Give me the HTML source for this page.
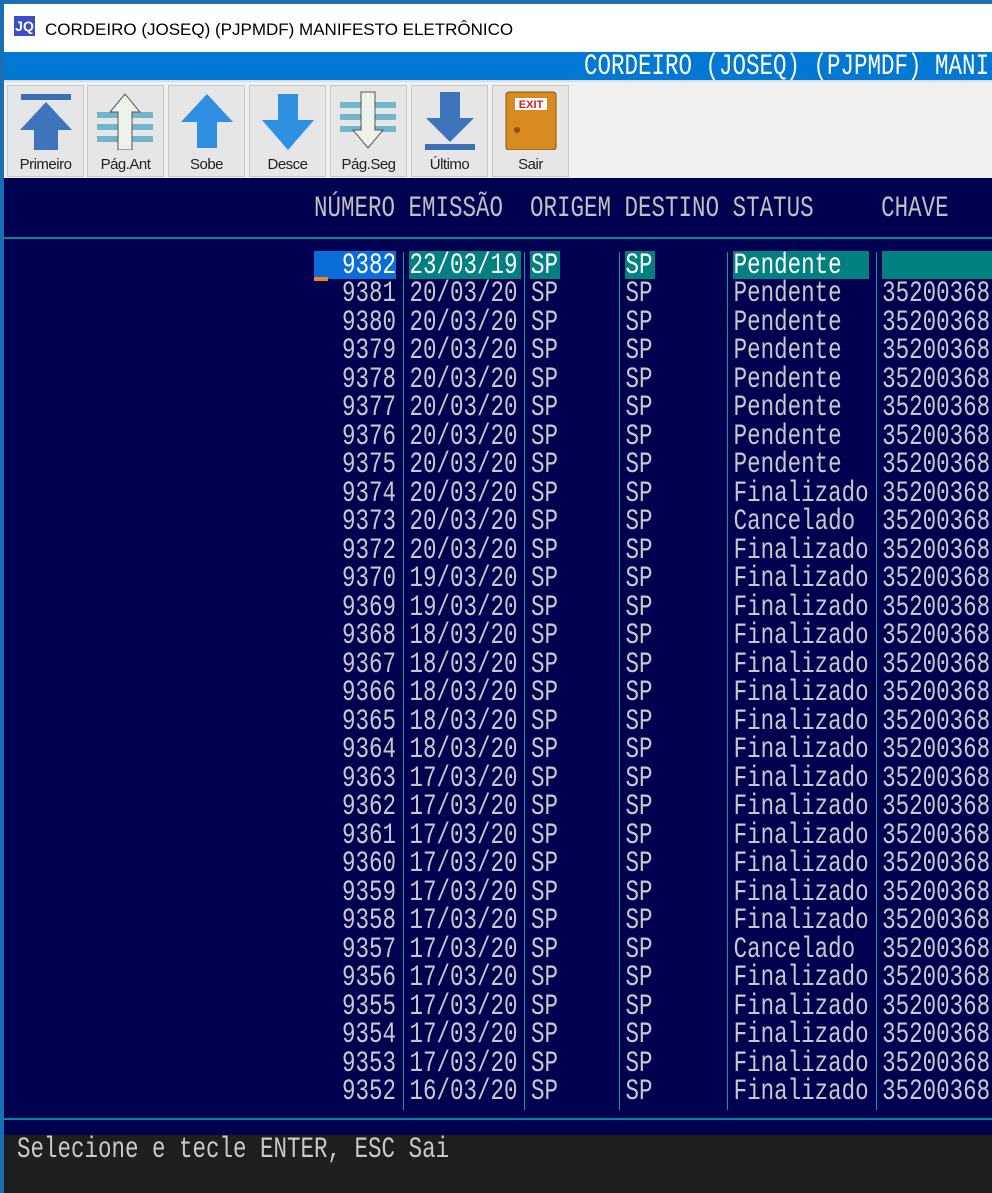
<!DOCTYPE html>
<html><head><meta charset="utf-8"><style>
*{margin:0;padding:0;box-sizing:border-box}
body{width:992px;height:1193px;overflow:hidden;background:#1b6fb0;position:relative;font-family:"Liberation Sans",sans-serif}
.win{position:absolute;left:4px;top:4px;width:988px;height:1189px;background:#000050}
.title{position:absolute;left:0;top:0;width:988px;height:48px;background:#fff}
.title .t{position:absolute;left:41px;top:16px;font-size:17px;color:#000}
.logo{position:absolute;left:10px;top:12px;width:21px;height:22px;background:#3a4ec8;color:#fff;font:bold 14px "Liberation Sans";text-align:center;line-height:20px;border-bottom:2px solid #fff}
.bluebar{position:absolute;left:0;top:48px;width:988px;height:28px;background:#0078d4}
.mono{font-family:"Liberation Mono","DejaVu Sans Mono",monospace}
.bluebar .t{position:absolute;left:580px;top:0;font-size:22.5px;color:#fff;white-space:pre;line-height:28px}
.tb{position:absolute;left:0;top:76px;width:988px;height:98px;background:#f0f0f0;border-top:2px solid #ddd}
.btn{position:absolute;top:3px;width:77px;height:92px;background:#e6e6e6;border:1px solid #c8c8c8}
.btn .l{position:absolute;left:0;right:0;bottom:3px;text-align:center;font-size:15px;color:#222;letter-spacing:-0.5px}
.btn svg{position:absolute;left:6px;top:4px}
.r{position:absolute;height:28px;line-height:28px;font-size:22.5px;color:#c8c8c8;white-space:pre;font-family:"Liberation Mono","DejaVu Sans Mono",monospace}
.s{display:inline-block;transform:scaleY(1.3)}
.sep{position:absolute;width:1px;background:#00a0a0;top:248px;height:858px}
</style></head><body>
<div class="win">
<div class="title"><div class="logo">JQ</div><div class="t">CORDEIRO (JOSEQ) (PJPMDF) MANIFESTO ELETRÔNICO</div></div>
<div class="bluebar"><div class="t mono"><span class="s">CORDEIRO (JOSEQ) (PJPMDF) MANI</span></div></div>
<div class="tb">
<div class="btn" style="left:3px"><svg width="64" height="60"><rect x="7" y="4" width="50" height="6" fill="#3a6fb5"/><path d="M32 12 L58 40 L44 40 L44 60 L20 60 L20 40 L6 40Z" fill="#3d74bb"/></svg><div class="l">Primeiro</div></div>
<div class="btn" style="left:83px"><svg width="64" height="60"><g fill="#6fb6cc"><rect x="3" y="22" width="56" height="6"/><rect x="3" y="34" width="56" height="6"/><rect x="3" y="46" width="56" height="6"/></g><path d="M31 4 L46 22 L38 22 L38 60 L24 60 L24 22 L16 22Z" fill="#eef0ea" stroke="#555"/></svg><div class="l">Pág.Ant</div></div>
<div class="btn" style="left:164px"><svg width="64" height="60"><path d="M32 4 L58 32 L42 32 L42 58 L22 58 L22 32 L6 32Z" fill="#2f8fe0"/></svg><div class="l">Sobe</div></div>
<div class="btn" style="left:245px"><svg width="64" height="60"><path d="M22 4 L42 4 L42 30 L58 30 L32 60 L6 30 L22 30Z" fill="#2f8fe0"/></svg><div class="l">Desce</div></div>
<div class="btn" style="left:326px"><svg width="64" height="60"><g fill="#6fb6cc"><rect x="3" y="12" width="56" height="6"/><rect x="3" y="24" width="56" height="6"/><rect x="3" y="36" width="56" height="6"/></g><path d="M24 2 L38 2 L38 40 L46 40 L31 58 L16 40 L24 40Z" fill="#eef0ea" stroke="#555"/></svg><div class="l">Pág.Seg</div></div>
<div class="btn" style="left:407px"><svg width="64" height="60"><path d="M22 2 L42 2 L42 28 L56 28 L32 52 L8 28 L22 28Z" fill="#3d74bb"/><rect x="7" y="54" width="50" height="6" fill="#3a6fb5"/></svg><div class="l">Último</div></div>
<div class="btn" style="left:488px"><svg width="64" height="60"><rect x="7" y="2" width="50" height="58" rx="3" fill="#d68a20" stroke="#8a5200"/><rect x="16" y="8" width="32" height="12" fill="#fff"/><text x="32" y="18" font-size="11" font-weight="bold" fill="#d02020" text-anchor="middle" font-family="Liberation Sans">EXIT</text><circle cx="18" cy="40" r="3" fill="#8a5200"/></svg><div class="l">Sair</div></div>
</div>
<div style="position:absolute;left:0;top:233px;width:988px;height:2px;background:#008c96"></div>
<div style="position:absolute;left:0;top:1114px;width:988px;height:2px;background:#008c96"></div>
<div style="position:absolute;left:0;top:1131px;width:988px;height:58px;background:#1e1e1e"></div>
<div class="r" style="left:13px;top:1131px;color:#c8c8c8"><span class="s">Selecione e tecle ENTER, ESC Sai</span></div>
<div class="r" style="left:310px;top:190px;color:#c0c0c0"><span class="s">NÚMERO EMISSÃO  ORIGEM DESTINO STATUS     CHAVE</span></div>
<div class="sep" style="left:399px"></div><div class="sep" style="left:520px"></div><div class="sep" style="left:615px"></div><div class="sep" style="left:723px"></div><div class="sep" style="left:872px"></div>
<div style="position:absolute;left:310px;top:247px;width:82px;height:28px;background:#0a6ed8"></div>
<div style="position:absolute;left:310px;top:273px;width:14px;height:4px;background:#f08020"></div>
<div style="position:absolute;left:405px;top:247px;width:112px;height:28px;background:#008080"></div>
<div style="position:absolute;left:526px;top:247px;width:30px;height:28px;background:#008080"></div>
<div style="position:absolute;left:621px;top:247px;width:30px;height:28px;background:#008080"></div>
<div style="position:absolute;left:729px;top:247px;width:136px;height:28px;background:#008080"></div>
<div style="position:absolute;left:878px;top:247px;width:110px;height:28px;background:#008080"></div>
<div class="r" style="left:338px;top:247px;color:#fff"><span class="s">9382 23/03/19 SP     SP      Pendente</span></div>
<div class="r" style="left:338px;top:275px"><span class="s">9381 20/03/20 SP     SP      Pendente   35200368</span></div>
<div class="r" style="left:338px;top:304px"><span class="s">9380 20/03/20 SP     SP      Pendente   35200368</span></div>
<div class="r" style="left:338px;top:332px"><span class="s">9379 20/03/20 SP     SP      Pendente   35200368</span></div>
<div class="r" style="left:338px;top:361px"><span class="s">9378 20/03/20 SP     SP      Pendente   35200368</span></div>
<div class="r" style="left:338px;top:389px"><span class="s">9377 20/03/20 SP     SP      Pendente   35200368</span></div>
<div class="r" style="left:338px;top:418px"><span class="s">9376 20/03/20 SP     SP      Pendente   35200368</span></div>
<div class="r" style="left:338px;top:446px"><span class="s">9375 20/03/20 SP     SP      Pendente   35200368</span></div>
<div class="r" style="left:338px;top:475px"><span class="s">9374 20/03/20 SP     SP      Finalizado 35200368</span></div>
<div class="r" style="left:338px;top:503px"><span class="s">9373 20/03/20 SP     SP      Cancelado  35200368</span></div>
<div class="r" style="left:338px;top:532px"><span class="s">9372 20/03/20 SP     SP      Finalizado 35200368</span></div>
<div class="r" style="left:338px;top:560px"><span class="s">9370 19/03/20 SP     SP      Finalizado 35200368</span></div>
<div class="r" style="left:338px;top:589px"><span class="s">9369 19/03/20 SP     SP      Finalizado 35200368</span></div>
<div class="r" style="left:338px;top:617px"><span class="s">9368 18/03/20 SP     SP      Finalizado 35200368</span></div>
<div class="r" style="left:338px;top:646px"><span class="s">9367 18/03/20 SP     SP      Finalizado 35200368</span></div>
<div class="r" style="left:338px;top:674px"><span class="s">9366 18/03/20 SP     SP      Finalizado 35200368</span></div>
<div class="r" style="left:338px;top:703px"><span class="s">9365 18/03/20 SP     SP      Finalizado 35200368</span></div>
<div class="r" style="left:338px;top:731px"><span class="s">9364 18/03/20 SP     SP      Finalizado 35200368</span></div>
<div class="r" style="left:338px;top:760px"><span class="s">9363 17/03/20 SP     SP      Finalizado 35200368</span></div>
<div class="r" style="left:338px;top:788px"><span class="s">9362 17/03/20 SP     SP      Finalizado 35200368</span></div>
<div class="r" style="left:338px;top:817px"><span class="s">9361 17/03/20 SP     SP      Finalizado 35200368</span></div>
<div class="r" style="left:338px;top:845px"><span class="s">9360 17/03/20 SP     SP      Finalizado 35200368</span></div>
<div class="r" style="left:338px;top:874px"><span class="s">9359 17/03/20 SP     SP      Finalizado 35200368</span></div>
<div class="r" style="left:338px;top:902px"><span class="s">9358 17/03/20 SP     SP      Finalizado 35200368</span></div>
<div class="r" style="left:338px;top:931px"><span class="s">9357 17/03/20 SP     SP      Cancelado  35200368</span></div>
<div class="r" style="left:338px;top:959px"><span class="s">9356 17/03/20 SP     SP      Finalizado 35200368</span></div>
<div class="r" style="left:338px;top:988px"><span class="s">9355 17/03/20 SP     SP      Finalizado 35200368</span></div>
<div class="r" style="left:338px;top:1016px"><span class="s">9354 17/03/20 SP     SP      Finalizado 35200368</span></div>
<div class="r" style="left:338px;top:1045px"><span class="s">9353 17/03/20 SP     SP      Finalizado 35200368</span></div>
<div class="r" style="left:338px;top:1073px"><span class="s">9352 16/03/20 SP     SP      Finalizado 35200368</span></div>
</div>
</body></html>
